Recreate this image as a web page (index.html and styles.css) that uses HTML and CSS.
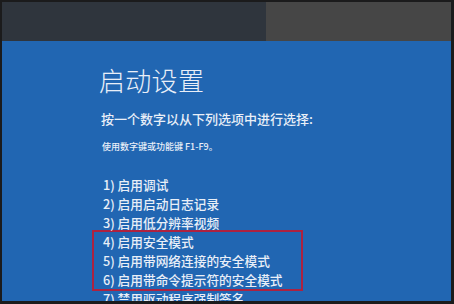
FILE: index.html
```html
<!DOCTYPE html>
<html lang="zh-CN">
<head>
<meta charset="utf-8">
<title>启动设置</title>
<link rel="stylesheet" href="styles.css">
</head>
<body>
<div class="frame">
  <div class="topbar">
    <div class="topbar-left"></div>
    <div class="topbar-right"></div>
  </div>
  <div class="screen">
    <h1 class="title">启动设置</h1>
    <p class="prompt">按一个数字以从下列选项中进行选择:</p>
    <p class="hint">使用数字键或功能键 F1-F9。</p>
    <ul class="options">
      <li>1) 启用调试</li>
      <li>2) 启用启动日志记录</li>
      <li>3) 启用低分辨率视频</li>
      <li class="highlight">
        <ul class="options">
          <li>4) 启用安全模式</li>
          <li>5) 启用带网络连接的安全模式</li>
          <li>6) 启用带命令提示符的安全模式</li>
        </ul>
      </li>
      <li>7) 禁用驱动程序强制签名</li>
    </ul>
  </div>
</div>
</body>
</html>
```
FILE: styles.css
```css
html, body {
  margin: 0;
  padding: 0;
  background: #1b1b1c;
}
.frame {
  width: 454px;
  height: 304px;
  box-sizing: border-box;
  padding: 2px 3px 3px 2px;
  background: #1b1b1c;
  display: flex;
  flex-direction: column;
  overflow: hidden;
  font-family: "Noto Sans CJK SC", "Noto Sans", sans-serif;
}
.topbar {
  height: 39px;
  display: flex;
  flex: none;
}
.topbar-left {
  width: 264px;
  background: #2f353d;
}
.topbar-right {
  flex: 1;
  background: #464646;
}
.screen {
  flex: 1;
  background: #2166b2;
  color: #e9eff8;
  padding: 26px 0 0 97px;
  overflow: hidden;
}
.title {
  margin: 0;
  font-size: 26px;
  line-height: 26px;
  font-weight: 300;
  letter-spacing: 0.3px;
}
.prompt {
  margin: 19px 0 0 2px;
  font-size: 13px;
  line-height: 13px;
  font-weight: 500;
}
.hint {
  margin: 16.5px 0 0 3px;
  font-size: 9px;
  line-height: 9px;
  font-weight: 500;
}
.options {
  list-style: none;
  margin: 24px 0 0 4px;
  padding: 0;
  font-size: 12.7px;
  line-height: 19px;
  font-weight: 500;
}
.highlight {
  margin: -2px 0 -2px -11px;
  padding-left: 9px;
  width: 211px;
  box-sizing: border-box;
  border: 2px solid #ad2240;
}
.highlight .options {
  margin: 0;
}
```
